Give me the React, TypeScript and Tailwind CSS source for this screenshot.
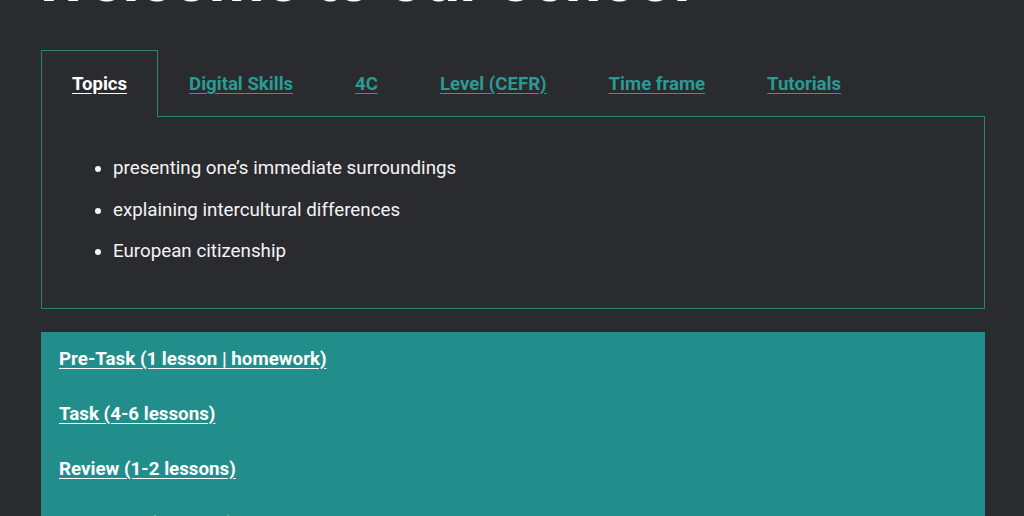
const tabs = ["Topics", "Digital Skills", "4C", "Level (CEFR)", "Time frame", "Tutorials"];

const topics = [
  "presenting one’s immediate surroundings",
  "explaining intercultural differences",
  "European citizenship",
];

const phases = [
  "Pre-Task (1 lesson | homework)",
  "Task (4-6 lessons)",
  "Review (1-2 lessons)",
  "Post-Task (1 lesson)",
];

export default function App() {
  return (
    <div className="h-[516px] overflow-hidden bg-[#2a2b2f] font-['Roboto',sans-serif] text-[#f4f4f4]">
      <div className="ml-[41px] w-[944px]">
        <h1 className="-mt-[52px] ml-[-8px] h-[64px] text-[64px] leading-[64px] font-bold whitespace-nowrap text-white">
          Welcome to our school
        </h1>

        <nav className="mt-[38px] flex">
          {tabs.map((tab, i) => (
            <div
              key={tab}
              className={`relative z-10 -mb-px border border-b-0 px-[30px] pt-[20px] pb-[19px] ${
                i === 0 ? "border-[#2f7f7b] bg-[#2a2b2f]" : "border-transparent"
              }`}
            >
              <a
                href="#"
                className={`block text-[18.6px] leading-[27px] font-bold underline underline-offset-[3px] ${
                  i === 0 ? "text-white" : "text-[#2a9a94]"
                }`}
              >
                {tab}
              </a>
            </div>
          ))}
        </nav>

        <div className="border border-[#2f7f7b] pt-[38px] pb-[43px] pl-[71px]">
          <ul className="list-disc space-y-[14.5px] text-[18.75px] leading-[27px]">
            {topics.map((t) => (
              <li key={t}>{t}</li>
            ))}
          </ul>
        </div>

        <div className="mt-[23px] bg-[#218e8b] px-[18px] pt-[14px]">
          {phases.map((p) => (
            <p key={p} className="mb-[28px] text-[18.75px] leading-[27px] font-bold">
              <a href="#" className="text-white underline underline-offset-[3px]">
                {p}
              </a>
            </p>
          ))}
        </div>
      </div>
    </div>
  );
}
